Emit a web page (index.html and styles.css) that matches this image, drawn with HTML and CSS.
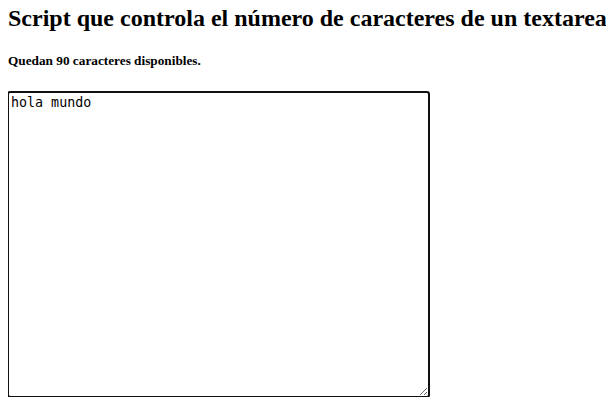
FILE: index.html
```html
<!DOCTYPE html>
<html lang="es">
<head>
<meta charset="utf-8">
<title>Contador de caracteres</title>
<link rel="stylesheet" href="styles.css">
</head>
<body class="page">
<h2 class="title">Script que controla el número de caracteres de un textarea</h2>
<h5 class="counter">Quedan 90 caracteres disponibles.</h5>
<textarea class="editor" cols="50" rows="20" autofocus>hola mundo</textarea>
<script src="script.js"></script>
</body>
</html>
```
FILE: styles.css
```css
.page {
  margin: 8px;
  font-family: "Liberation Serif", "Times New Roman", serif;
  color: #000;
  background: #fff;
}
.title {
  font-size: 24px;
  line-height: 21px;
  font-weight: bold;
  white-space: nowrap;
  margin: 0 0 26px;
}
.counter {
  font-size: 13.28px;
  line-height: 11px;
  font-weight: bold;
  margin: 0 0 26px;
}
.editor {
  display: block;
  box-sizing: border-box;
  width: 421px;
  height: 305px;
  margin: 0;
  padding: 2px;
  font-family: "DejaVu Sans Mono", monospace;
  font-size: 13.33px;
  color: #000;
  border: 1px solid #767676;
  border-radius: 2px;
  outline: 2px solid #101010;
  outline-offset: -1px;
}
```
FILE: script.js
```js
var ed = document.querySelector('.editor');
ed.focus();
ed.setSelectionRange(ed.value.length, ed.value.length);
```
